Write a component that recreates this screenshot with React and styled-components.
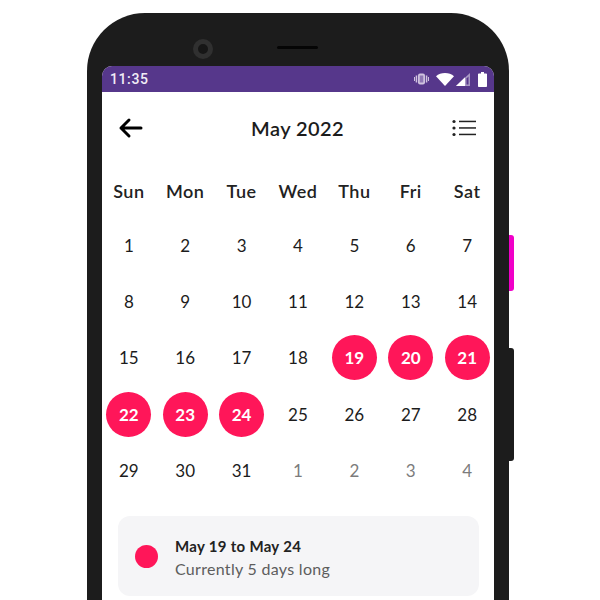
import React from "react";
import styled, { createGlobalStyle } from "styled-components";

const weekDays = ["Sun", "Mon", "Tue", "Wed", "Thu", "Fri", "Sat"];
const days = [
  ...Array.from({ length: 31 }, (_, i) => ({ n: i + 1, selected: i + 1 >= 19 && i + 1 <= 24 })),
  ...[1, 2, 3, 4].map((n) => ({ n, muted: true })),
];

const App = () => (
  <Page>
    <GlobalStyle />
    <Phone>
      <PinkKey />
      <SideKey />
      <TopBezel>
        <Camera />
        <Speaker />
      </TopBezel>
      <Screen>
        <StatusBar>
          <Clock>11:35</Clock>
          <StatusIcons>
            <svg width="15" height="14" viewBox="0 0 15 14" fill="#cfc3df">
              <rect x="4" y="1.500" width="7" height="11" rx="2" fill="#cfc3df" />
              <rect x="5.700" y="3.500" width="3.600" height="7" fill="#8f78b4" />
              <rect x="1.700" y="3.500" width="1.500" height="7" />
              <rect x="11.800" y="3.500" width="1.500" height="7" />
              <rect x="0" y="5" width="1" height="4" />
              <rect x="14" y="5" width="1" height="4" />
            </svg>
            <svg width="18" height="13" viewBox="0 0 18 13" fill="#fff">
              <path d="M0 3.200C2.400 1.200 5.500 0 9 0s6.600 1.200 9 3.200L9 13z" />
            </svg>
            <svg width="14" height="13" viewBox="0 0 14 13">
              <path d="M0 13L14 0v13z" fill="#a898c4" />
              <path d="M9 4.200L0 13h9z" fill="#fff" />
              <path d="M12.500 3.600V11.500H10.500V5.500z" fill="#56378b" />
            </svg>
            <svg width="9" height="15" viewBox="0 0 9 15" fill="#fff">
              <path d="M3 0h3v1.400h2.200c.4 0 .8.400.8.800V14c0 .500-.4 1-.8 1H.8c-.4 0-.8-.5-.8-1V2.200c0-.4.400-.8.800-.8H3z" />
            </svg>
          </StatusIcons>
        </StatusBar>
        <Header>
          <svg width="25" height="22" viewBox="0 0 25 22" fill="none" stroke="#000" strokeWidth="3" strokeLinecap="round" strokeLinejoin="round">
            <path d="M23 11H3M11 3l-8 8 8 8" />
          </svg>
          <MonthTitle>May 2022</MonthTitle>
          <svg width="25" height="18" viewBox="0 0 25 18" fill="#222">
            <circle cx="2" cy="2.500" r="1.600" />
            <circle cx="2" cy="9" r="1.600" />
            <circle cx="2" cy="15.500" r="1.600" />
            <rect x="7" y="1.700" width="17" height="1.500" />
            <rect x="7" y="8.200" width="17" height="1.500" />
            <rect x="7" y="14.700" width="17" height="1.500" />
          </svg>
        </Header>
        <CalendarGrid>
          {weekDays.map((d) => (
            <WeekDay key={d}>{d}</WeekDay>
          ))}
        </CalendarGrid>
        <CalendarGrid>
          {days.map((d, i) => (
            <DayCell key={i}>
              <DayNumber $selected={d.selected} $muted={d.muted}>
                {d.n}
              </DayNumber>
            </DayCell>
          ))}
        </CalendarGrid>
        <RangeCard>
          <RangeDot />
          <RangeText>
            <RangeTitle>May 19 to May 24</RangeTitle>
            <RangeSub>Currently 5 days long</RangeSub>
          </RangeText>
        </RangeCard>
      </Screen>
    </Phone>
  </Page>
);

const GlobalStyle = createGlobalStyle`
  html, body {
    margin: 0;
    padding: 0;
    background: #fff;
  }
`;

const Page = styled.div`
  width: 600px;
  height: 600px;
  overflow: hidden;
  padding: 13px 0 0 87px;
  box-sizing: border-box;
  font-family: "Lato", "Open Sans", sans-serif;
  color: #1c1c1c;
`;

const Phone = styled.div`
  position: relative;
  width: 422px;
  height: 700px;
  padding: 0 15px;
  box-sizing: border-box;
  background: #1c1c1c;
  border-radius: 58px 58px 0 0;
`;

const PinkKey = styled.div`
  position: absolute;
  left: 422px;
  top: 222px;
  width: 5px;
  height: 56px;
  background: #f000c8;
  border-radius: 0 3px 3px 0;
`;

const SideKey = styled(PinkKey)`
  top: 335px;
  height: 113px;
  background: #1c1c1c;
`;

const TopBezel = styled.div`
  height: 53px;
  display: flex;
  align-items: center;
  padding: 19px 0 0 91px;
  box-sizing: border-box;
  gap: 64px;
`;

const Camera = styled.div`
  width: 10px;
  height: 10px;
  border-radius: 50%;
  background: #161616;
  border: 5px solid #303030;
`;

const Speaker = styled.div`
  width: 41px;
  height: 3px;
  margin-bottom: 4px;
  border-radius: 2px;
  background: #050505;
`;

const Screen = styled.div`
  background: #fff;
  border-radius: 10px 10px 0 0;
  overflow: hidden;
  height: 640px;
`;

const StatusBar = styled.div`
  height: 26px;
  background: #56378b;
  display: flex;
  align-items: center;
  justify-content: space-between;
  padding: 0 7px 0 8px;
`;

const Clock = styled.span`
  font-family: "Roboto", sans-serif;
  font-weight: 500;
  font-size: 14px;
  letter-spacing: 0.6px;
  color: #f1edf6;
`;

const StatusIcons = styled.div`
  display: flex;
  align-items: center;
  gap: 8px;
  & > svg:nth-child(2) {
    margin-left: -1px;
  }
  & > svg:nth-child(3) {
    margin-left: -6px;
  }
`;

const Header = styled.div`
  height: 72px;
  display: flex;
  align-items: center;
  justify-content: space-between;
  padding: 0 17px 0 16px;
`;

const MonthTitle = styled.h1`
  margin: 0;
  font-size: 20px;
  font-weight: 600;
  color: #1c1c1c;
  letter-spacing: 0.4px;
`;

const CalendarGrid = styled.div`
  display: grid;
  grid-template-columns: repeat(7, 56.4px);
  justify-content: center;
  margin: 0 -2px;
`;

const WeekDay = styled.div`
  height: 53px;
  padding-top: 16px;
  box-sizing: border-box;
  text-align: center;
  font-size: 18px;
  font-weight: 600;
  letter-spacing: 0.5px;
  color: #222;
`;

const DayCell = styled.div`
  height: 56.4px;
  display: flex;
  align-items: center;
  justify-content: center;
`;

const DayNumber = styled.div`
  width: 45px;
  height: 45px;
  border-radius: 50%;
  display: flex;
  align-items: center;
  justify-content: center;
  font-size: 17px;
  font-weight: ${(p) => (p.$selected ? 700 : 400)};
  background: ${(p) => (p.$selected ? "#ff1659" : "transparent")};
  color: ${(p) => (p.$selected ? "#fff" : p.$muted ? "#7c7c7c" : "#1c1c1c")};
`;

const RangeCard = styled.div`
  margin: 17px 15px 0 16px;
  height: 79px;
  border-radius: 12px;
  background: #f5f5f7;
  display: flex;
  align-items: center;
  padding: 1px 17px 0;
  gap: 17px;
`;

const RangeDot = styled.div`
  width: 23px;
  height: 23px;
  border-radius: 50%;
  background: #ff1659;
`;

const RangeText = styled.div`
  display: flex;
  flex-direction: column;
  gap: 3px;
  padding-top: 2px;
`;

const RangeTitle = styled.div`
  font-size: 15px;
  font-weight: 700;
  line-height: 20px;
  letter-spacing: 0.3px;
  color: #222;
`;

const RangeSub = styled.div`
  font-size: 16px;
  line-height: 20px;
  letter-spacing: 0.3px;
  color: #5d5d5d;
`;

export default App;
